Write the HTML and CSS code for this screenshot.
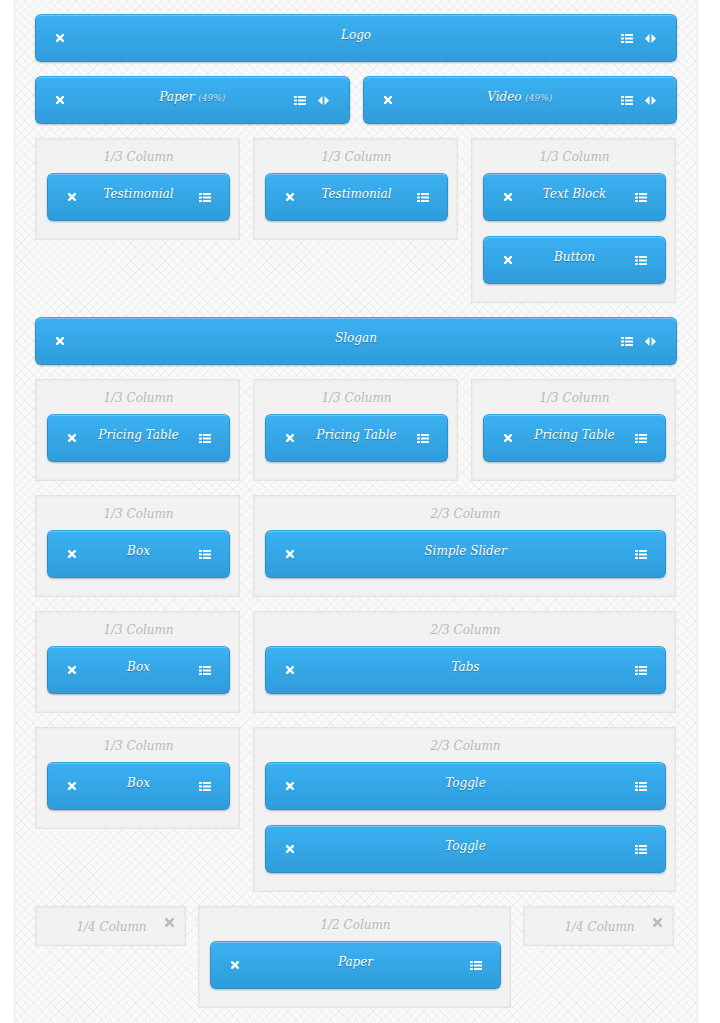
FILE: index.html
```html
<!DOCTYPE html>
<html lang="en">
<head>
  <meta charset="UTF-8">
  <title>Page Builder</title>
  <link rel="stylesheet" href="styles.css">
</head>
<body>

<svg width="0" height="0" class="defs">
  <defs>
    <symbol id="i-close" viewBox="0 0 8 8">
      <path d="M1 1L7 7M7 1L1 7" stroke="currentColor" stroke-width="2.4" stroke-linecap="square"/>
    </symbol>
    <symbol id="i-list" viewBox="0 0 12 9">
      <rect x="0" y="0" width="3" height="2" fill="currentColor"/>
      <rect x="4" y="0" width="8" height="2" fill="currentColor"/>
      <rect x="0" y="3.5" width="3" height="2" fill="currentColor"/>
      <rect x="4" y="3.5" width="8" height="2" fill="currentColor"/>
      <rect x="0" y="7" width="3" height="2" fill="currentColor"/>
      <rect x="4" y="7" width="8" height="2" fill="currentColor"/>
    </symbol>
    <symbol id="i-resize" viewBox="0 0 11 9">
      <path d="M4.5 0L0 4.5L4.5 9Z" fill="currentColor"/>
      <path d="M6.5 0L11 4.5L6.5 9Z" fill="currentColor"/>
    </symbol>
  </defs>
</svg>

<div class="builder">

  <div class="row">
    <div class="block">
      <svg class="ico-close"><use href="#i-close"/></svg>
      <span class="block-title">Logo</span>
      <span class="block-actions">
        <svg class="ico-list"><use href="#i-list"/></svg>
        <svg class="ico-resize"><use href="#i-resize"/></svg>
      </span>
    </div>
  </div>

  <div class="row">
    <div class="block">
      <svg class="ico-close"><use href="#i-close"/></svg>
      <span class="block-title">Paper <small>(49%)</small></span>
      <span class="block-actions">
        <svg class="ico-list"><use href="#i-list"/></svg>
        <svg class="ico-resize"><use href="#i-resize"/></svg>
      </span>
    </div>
    <div class="block">
      <svg class="ico-close"><use href="#i-close"/></svg>
      <span class="block-title">Video <small>(49%)</small></span>
      <span class="block-actions">
        <svg class="ico-list"><use href="#i-list"/></svg>
        <svg class="ico-resize"><use href="#i-resize"/></svg>
      </span>
    </div>
  </div>

  <div class="row">
    <div class="column third">
      <div class="column-label">1/3 Column</div>
      <div class="block">
        <svg class="ico-close"><use href="#i-close"/></svg>
        <span class="block-title">Testimonial</span>
        <span class="block-actions"><svg class="ico-list"><use href="#i-list"/></svg></span>
      </div>
    </div>
    <div class="column third">
      <div class="column-label">1/3 Column</div>
      <div class="block">
        <svg class="ico-close"><use href="#i-close"/></svg>
        <span class="block-title">Testimonial</span>
        <span class="block-actions"><svg class="ico-list"><use href="#i-list"/></svg></span>
      </div>
    </div>
    <div class="column third">
      <div class="column-label">1/3 Column</div>
      <div class="block">
        <svg class="ico-close"><use href="#i-close"/></svg>
        <span class="block-title">Text Block</span>
        <span class="block-actions"><svg class="ico-list"><use href="#i-list"/></svg></span>
      </div>
      <div class="block">
        <svg class="ico-close"><use href="#i-close"/></svg>
        <span class="block-title">Button</span>
        <span class="block-actions"><svg class="ico-list"><use href="#i-list"/></svg></span>
      </div>
    </div>
  </div>

  <div class="row">
    <div class="block">
      <svg class="ico-close"><use href="#i-close"/></svg>
      <span class="block-title">Slogan</span>
      <span class="block-actions">
        <svg class="ico-list"><use href="#i-list"/></svg>
        <svg class="ico-resize"><use href="#i-resize"/></svg>
      </span>
    </div>
  </div>

  <div class="row">
    <div class="column third">
      <div class="column-label">1/3 Column</div>
      <div class="block">
        <svg class="ico-close"><use href="#i-close"/></svg>
        <span class="block-title">Pricing Table</span>
        <span class="block-actions"><svg class="ico-list"><use href="#i-list"/></svg></span>
      </div>
    </div>
    <div class="column third">
      <div class="column-label">1/3 Column</div>
      <div class="block">
        <svg class="ico-close"><use href="#i-close"/></svg>
        <span class="block-title">Pricing Table</span>
        <span class="block-actions"><svg class="ico-list"><use href="#i-list"/></svg></span>
      </div>
    </div>
    <div class="column third">
      <div class="column-label">1/3 Column</div>
      <div class="block">
        <svg class="ico-close"><use href="#i-close"/></svg>
        <span class="block-title">Pricing Table</span>
        <span class="block-actions"><svg class="ico-list"><use href="#i-list"/></svg></span>
      </div>
    </div>
  </div>

  <div class="row">
    <div class="column third">
      <div class="column-label">1/3 Column</div>
      <div class="block">
        <svg class="ico-close"><use href="#i-close"/></svg>
        <span class="block-title">Box</span>
        <span class="block-actions"><svg class="ico-list"><use href="#i-list"/></svg></span>
      </div>
    </div>
    <div class="column two-thirds">
      <div class="column-label">2/3 Column</div>
      <div class="block">
        <svg class="ico-close"><use href="#i-close"/></svg>
        <span class="block-title">Simple Slider</span>
        <span class="block-actions"><svg class="ico-list"><use href="#i-list"/></svg></span>
      </div>
    </div>
  </div>

  <div class="row">
    <div class="column third">
      <div class="column-label">1/3 Column</div>
      <div class="block">
        <svg class="ico-close"><use href="#i-close"/></svg>
        <span class="block-title">Box</span>
        <span class="block-actions"><svg class="ico-list"><use href="#i-list"/></svg></span>
      </div>
    </div>
    <div class="column two-thirds">
      <div class="column-label">2/3 Column</div>
      <div class="block">
        <svg class="ico-close"><use href="#i-close"/></svg>
        <span class="block-title">Tabs</span>
        <span class="block-actions"><svg class="ico-list"><use href="#i-list"/></svg></span>
      </div>
    </div>
  </div>

  <div class="row">
    <div class="column third">
      <div class="column-label">1/3 Column</div>
      <div class="block">
        <svg class="ico-close"><use href="#i-close"/></svg>
        <span class="block-title">Box</span>
        <span class="block-actions"><svg class="ico-list"><use href="#i-list"/></svg></span>
      </div>
    </div>
    <div class="column two-thirds">
      <div class="column-label">2/3 Column</div>
      <div class="block">
        <svg class="ico-close"><use href="#i-close"/></svg>
        <span class="block-title">Toggle</span>
        <span class="block-actions"><svg class="ico-list"><use href="#i-list"/></svg></span>
      </div>
      <div class="block">
        <svg class="ico-close"><use href="#i-close"/></svg>
        <span class="block-title">Toggle</span>
        <span class="block-actions"><svg class="ico-list"><use href="#i-list"/></svg></span>
      </div>
    </div>
  </div>

  <div class="row row-tight">
    <div class="column quarter empty">
      <div class="column-label">1/4 Column</div>
      <svg class="column-close"><use href="#i-close"/></svg>
    </div>
    <div class="column half">
      <div class="column-label">1/2 Column</div>
      <div class="block">
        <svg class="ico-close"><use href="#i-close"/></svg>
        <span class="block-title">Paper</span>
        <span class="block-actions"><svg class="ico-list"><use href="#i-list"/></svg></span>
      </div>
    </div>
    <div class="column quarter empty">
      <div class="column-label">1/4 Column</div>
      <svg class="column-close"><use href="#i-close"/></svg>
    </div>
  </div>

</div>

</body>
</html>
```

FILE: styles.css
```css
* {
  margin: 0;
  padding: 0;
  box-sizing: border-box;
}

body {
  background-color: #fff;
  font-family: 'DejaVu Serif', Georgia, serif;
}

.defs {
  position: absolute;
}

.builder {
  margin-left: 14px;
  width: 684px;
  min-height: 1023px;
  padding: 14px 20px;
  border-left: 1px solid #ebebeb;
  border-right: 1px solid #ebebeb;
  background-color: #f9f9f9;
  background-image:
    repeating-linear-gradient(45deg, rgba(0, 0, 0, 0.035) 0 1px, transparent 1px 6px),
    repeating-linear-gradient(-45deg, rgba(0, 0, 0, 0.035) 0 1px, transparent 1px 6px);
}

.row {
  display: flex;
  align-items: flex-start;
  gap: 13px;
  margin-bottom: 14px;
}

.row-tight {
  gap: 12px;
}

/* blue element bar */
.block {
  flex: 1;
  display: grid;
  grid-template-columns: 1fr auto 1fr;
  align-items: center;
  height: 48px;
  padding: 0 20px;
  color: #fff;
  border: 1px solid #2b91d0;
  border-top-color: #3aa6e6;
  border-radius: 6px;
  background: linear-gradient(to bottom, #3bb1f2 0%, #2f9cdb 100%);
  box-shadow: inset 0 1px 0 rgba(255, 255, 255, 0.25), 0 1px 2px rgba(0, 0, 0, 0.25);
}

.block-title {
  text-align: center;
  font-style: italic;
  font-size: 12px;
  padding-bottom: 7px;
  text-shadow: 0 1px 1px rgba(0, 0, 0, 0.3);
  white-space: nowrap;
}

.block-title small {
  font-size: 9px;
  color: #cfe6f7;
}

.block-actions {
  justify-self: end;
  display: flex;
  align-items: center;
  gap: 12px;
}

.ico-close {
  width: 8px;
  height: 8px;
}

.ico-list {
  width: 12px;
  height: 9px;
}

.ico-resize {
  width: 11px;
  height: 9px;
}

.column .block-actions {
  margin-right: -2px;
}

/* grey column container */
.column {
  position: relative;
  padding: 0 9px 3px 11px;
  background-color: #f2f2f2;
  border: 1px solid #e3e3e3;
  box-shadow: inset 0 0 3px rgba(0, 0, 0, 0.06);
}

.column .block {
  margin-bottom: 15px;
}

.column-label {
  height: 34px;
  line-height: 37px;
  text-align: center;
  font-style: italic;
  font-size: 12px;
  color: #b9b9b9;
}

.third {
  width: 205px;
}

.two-thirds {
  width: 423px;
}

.quarter {
  width: 151px;
}

.half {
  width: 313px;
}

.column.empty {
  height: 40px;
}

.column.empty .column-label {
  height: 38px;
  line-height: 40px;
}

.column-close {
  position: absolute;
  top: 11px;
  right: 11px;
  width: 9px;
  height: 9px;
  color: #bcbcbc;
}
```
